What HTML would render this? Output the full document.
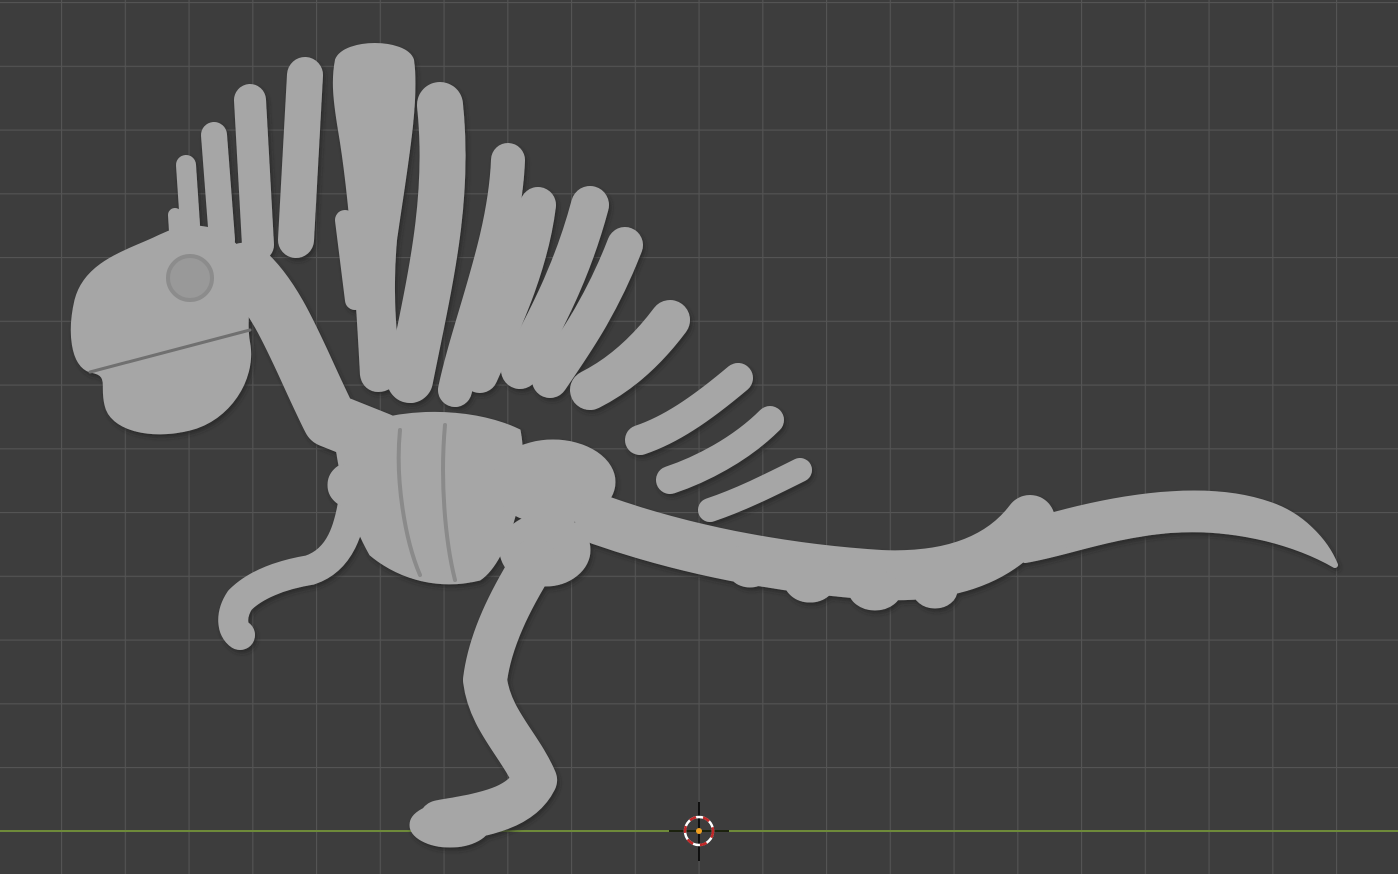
<!DOCTYPE html>
<html><head><meta charset="utf-8"><style>
html,body{margin:0;padding:0;background:#3d3d3d;width:1398px;height:874px;overflow:hidden}
svg{display:block}
</style></head><body>
<svg width="1398" height="874" viewBox="0 0 1398 874" xmlns="http://www.w3.org/2000/svg">
<defs>
<pattern id="g" x="61" y="2" width="63.75" height="63.75" patternUnits="userSpaceOnUse">
<path d="M0.5 0V63.75M0 0.5H63.75" stroke="#545454" stroke-width="1.2" fill="none"/>
</pattern>
<filter id="sh"><feDropShadow dx="2" dy="3" stdDeviation="2" flood-color="#222" flood-opacity="0.7"/></filter>
</defs>
<rect width="1398" height="874" fill="#3d3d3d"/>
<rect width="1398" height="874" fill="url(#g)"/>
<line x1="0" y1="831" x2="1398" y2="831" stroke="#6e8a3a" stroke-width="2"/>

<g filter="url(#sh)" fill="#a6a6a6" stroke="#a6a6a6" stroke-linecap="round" stroke-linejoin="round">
<g fill="none">
<path d="M186 165 L190 225" stroke-width="20"/>
<path d="M214 135 L222 240" stroke-width="26"/>
<path d="M250 100 L258 245" stroke-width="32"/>
<path d="M305 75 L296 240" stroke-width="36"/>
<path d="M440 105 C450 200 430 280 410 380" stroke-width="46"/>
<path d="M508 160 C505 240 470 320 455 390" stroke-width="34"/>
<path d="M538 205 C530 270 500 330 480 375" stroke-width="36"/>
<path d="M590 205 C570 280 540 330 520 370" stroke-width="38"/>
<path d="M625 245 C600 310 570 350 550 380" stroke-width="36"/>
<path d="M670 320 C640 360 610 380 590 390" stroke-width="40"/>
<path d="M738 378 C700 410 670 430 640 440" stroke-width="30"/>
<path d="M770 420 C740 450 700 470 670 480" stroke-width="28"/>
<path d="M800 470 C770 485 740 500 710 510" stroke-width="24"/>
<path d="M175 215 L178 265" stroke-width="14"/>
<path d="M345 220 L355 300" stroke-width="20"/>
</g>
<path d="M337 60 C345 40 405 40 412 60 C418 100 405 170 395 240 C390 300 395 340 400 375 C390 395 365 395 362 375 C358 300 352 200 340 130 C335 100 333 80 337 60Z" stroke-width="4"/>
<path d="M245 270 C280 300 300 360 330 420 L380 440" fill="none" stroke-width="55"/>
<path d="M75 300 C85 260 130 250 160 235 C200 215 240 230 248 270 C252 300 245 320 250 345 C255 380 230 420 190 430 C150 440 110 430 105 405 C100 385 110 375 90 372 C70 365 68 330 75 300Z"/>
<circle cx="190" cy="278" r="22" fill="#999" stroke="#8c8c8c" stroke-width="4"/>
<path d="M90 372 L250 330" fill="none" stroke="#6f6f6f" stroke-width="3"/>
<path d="M335 440 C380 405 470 405 520 430 C530 480 510 560 480 580 C440 590 400 580 370 555 C350 520 340 480 335 440Z"/>
<path d="M400 430 C395 480 405 540 420 575 M445 425 C440 480 445 540 455 580" fill="none" stroke="#8a8a8a" stroke-width="4"/>
<ellipse cx="553" cy="482" rx="62" ry="42"/>
<path d="M600 520 C700 555 800 570 880 575 C950 578 1000 560 1030 520" fill="none" stroke-width="50"/>
<path d="M1020 525 C1100 500 1200 480 1270 505 C1300 515 1325 540 1335 565 C1300 545 1240 525 1170 530 C1110 535 1060 555 1025 560Z" stroke-width="6"/>
<ellipse cx="690" cy="550" rx="22" ry="20"/>
<ellipse cx="750" cy="565" rx="24" ry="22"/>
<ellipse cx="810" cy="580" rx="26" ry="22"/>
<ellipse cx="875" cy="590" rx="26" ry="20"/>
<ellipse cx="935" cy="590" rx="22" ry="18"/>
<path d="M355 490 C350 530 340 560 310 570 C280 575 255 585 240 600 C230 615 232 630 240 635" fill="none" stroke-width="30"/>
<circle cx="350" cy="485" r="22"/>
<ellipse cx="545" cy="550" rx="45" ry="36"/>
<path d="M535 560 C510 600 490 640 485 680 C490 720 520 745 535 780 C520 810 480 815 440 822" fill="none" stroke-width="44"/>
<ellipse cx="450" cy="825" rx="40" ry="22"/>
</g>

<g transform="translate(699,831)">
<line x1="-30" y1="0" x2="30" y2="0" stroke="#000" stroke-width="1.5"/>
<line x1="0" y1="-29" x2="0" y2="30" stroke="#000" stroke-width="1.5"/>
<circle r="14" fill="none" stroke="#fff" stroke-width="2.5"/>
<circle r="14" fill="none" stroke="#c02828" stroke-width="2.5" stroke-dasharray="7 7"/>
<circle r="3" fill="#f0a020"/>
</g>
</svg>
</body></html>
